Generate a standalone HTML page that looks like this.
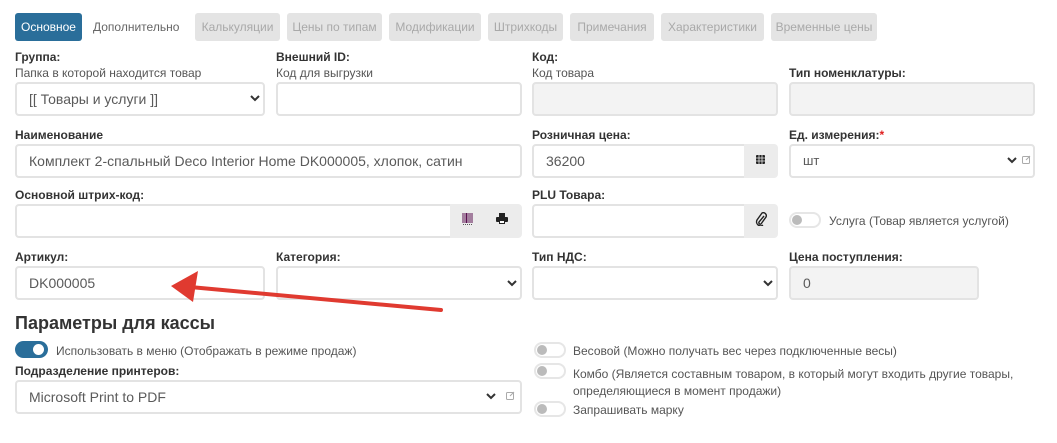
<!DOCTYPE html>
<html><head><meta charset="utf-8">
<style>
*{box-sizing:border-box;margin:0;padding:0}
body{width:1057px;height:443px;background:#fff;font-family:"Liberation Sans",sans-serif;color:#333;position:relative;overflow:hidden}
.a{position:absolute}
.tab{position:absolute;top:13px;height:28px;border-radius:3px;background:#e4e4e4;color:#a9a9a9;font-size:12px;line-height:28px;text-align:center}
.lb{position:absolute;font-size:12px;font-weight:bold;color:#333}
.sl{position:absolute;font-size:12px;color:#555}
.in{position:absolute;height:34px;border:2px solid #e3e3e3;border-radius:4px;background:#fff;font-size:14px;color:#5a5a5a;line-height:30px;padding-left:12px}
.ro{background:#f3f3f3}
.addon{position:absolute;height:34px;background:#ececec;border-radius:0 4px 4px 0}
.chev{position:absolute;width:10px;height:8px}
.tg{position:absolute;width:32px;height:16px;border-radius:8px;border:2px solid #e6e6e6;background:#fff}
.tg i{position:absolute;left:1px;top:1px;width:10px;height:10px;border-radius:5px;background:#bbb}
.tl{position:absolute;font-size:12px;color:#555}
</style></head><body>
<div class="tab" style="left:15px;width:67px;background:#2a6e9a;color:#fff">Основное</div>
<div class="a" style="left:93px;top:13px;line-height:28px;font-size:12px;color:#666">Дополнительно</div>
<div class="tab" style="left:195px;width:85px">Калькуляции</div>
<div class="tab" style="left:287px;width:95px">Цены по типам</div>
<div class="tab" style="left:389px;width:92px">Модификации</div>
<div class="tab" style="left:488px;width:75px">Штрихкоды</div>
<div class="tab" style="left:570px;width:84px">Примечания</div>
<div class="tab" style="left:661px;width:103px">Характеристики</div>
<div class="tab" style="left:771px;width:106px">Временные цены</div>

<div class="lb" style="left:15px;top:50px">Группа:</div>
<div class="sl" style="left:15px;top:66px">Папка в которой находится товар</div>
<div class="in" style="left:15px;top:82px;width:250px">[[ Товары и услуги ]]</div>
<svg class="chev" style="left:250px;top:94px" viewBox="0 0 10 8"><path d="M1 2l4 4 4-4" stroke="#333" stroke-width="2" fill="none"/></svg>

<div class="lb" style="left:276px;top:50px">Внешний ID:</div>
<div class="sl" style="left:276px;top:66px">Код для выгрузки</div>
<div class="in" style="left:276px;top:82px;width:246px"></div>

<div class="lb" style="left:532px;top:50px">Код:</div>
<div class="sl" style="left:532px;top:66px">Код товара</div>
<div class="in ro" style="left:532px;top:82px;width:246px"></div>

<div class="lb" style="left:789px;top:66px">Тип номенклатуры:</div>
<div class="in ro" style="left:789px;top:82px;width:246px"></div>

<div class="lb" style="left:15px;top:128px">Наименование</div>
<div class="in" style="left:15px;top:144px;width:507px">Комплект 2-спальный Deco Interior Home DK000005, хлопок, сатин</div>

<div class="lb" style="left:532px;top:128px">Розничная цена:</div>
<div class="in" style="left:532px;top:144px;width:214px;border-radius:4px 0 0 4px">36200</div>
<div class="addon" style="left:744px;top:144px;width:34px"></div>
<svg class="a" style="left:756px;top:155px" width="9" height="9" viewBox="0 0 9 9"><rect width="9" height="9" rx="1" fill="#222"/><path d="M0 3h9M0 6h9M3 0v9M6 0v9" stroke="#ececec" stroke-width=".8"/></svg>

<div class="lb" style="left:789px;top:128px">Ед. измерения:<span style="color:#e02020">*</span></div>
<div class="in" style="left:789px;top:144px;width:246px;font-size:13px">шт</div>
<svg class="chev" style="left:1007px;top:156px" viewBox="0 0 10 8"><path d="M1 2l4 4 4-4" stroke="#333" stroke-width="2" fill="none"/></svg>
<svg class="a" style="left:1022px;top:155px" width="9" height="9" viewBox="0 0 9 9"><rect x=".5" y="1.5" width="7" height="7" rx="1" fill="none" stroke="#aaa"/><path d="M4 5l4-4" stroke="#aaa"/></svg>

<div class="lb" style="left:15px;top:188px">Основной штрих-код:</div>
<div class="in" style="left:15px;top:204px;width:437px;border-radius:4px 0 0 4px"></div>
<div class="addon" style="left:450px;top:204px;width:72px"></div>
<svg class="a" style="left:462px;top:213px" width="11" height="12" viewBox="0 0 11 12"><path d="M1 0v10M3 0v10M4.5 0v10M6 0v10M8 0v10M10 0v10" stroke="#5a1050" stroke-width="1"/><path d="M1 11.5h9" stroke="#555" stroke-dasharray="1 1"/></svg>
<svg class="a" style="left:496px;top:213px" width="12" height="11" viewBox="0 0 12 11"><rect x="3" y="0" width="6" height="4" fill="#222"/><rect x="0" y="4" width="12" height="5" rx="1" fill="#222"/><rect x="3" y="7" width="6" height="4" fill="#222"/><rect x="4" y="8" width="4" height="2" fill="#fff"/></svg>

<div class="lb" style="left:532px;top:188px">PLU Товара:</div>
<div class="in" style="left:532px;top:204px;width:214px;border-radius:4px 0 0 4px"></div>
<div class="addon" style="left:744px;top:204px;width:34px"></div>
<svg class="a" style="left:755px;top:212px" width="12" height="14" viewBox="0 0 12 14"><path d="M9 4L4 10a1.5 1.5 0 0 0 2 2l5-7a3 3 0 0 0-4-4L2 8a4 4 0 0 0 6 5" stroke="#222" stroke-width="1.4" fill="none"/></svg>

<div class="tg" style="left:789px;top:212px"><i></i></div>
<div class="tl" style="left:829px;top:214px">Услуга (Товар является услугой)</div>

<div class="lb" style="left:15px;top:250px">Артикул:</div>
<div class="in" style="left:15px;top:266px;width:250px">DK000005</div>
<div class="lb" style="left:276px;top:250px">Категория:</div>
<div class="in" style="left:276px;top:266px;width:246px"></div>
<svg class="chev" style="left:507px;top:279px" viewBox="0 0 10 8"><path d="M1 2l4 4 4-4" stroke="#333" stroke-width="2" fill="none"/></svg>
<div class="lb" style="left:532px;top:250px">Тип НДС:</div>
<div class="in" style="left:532px;top:266px;width:246px"></div>
<svg class="chev" style="left:763px;top:279px" viewBox="0 0 10 8"><path d="M1 2l4 4 4-4" stroke="#333" stroke-width="2" fill="none"/></svg>
<div class="lb" style="left:789px;top:250px">Цена поступления:</div>
<div class="in ro" style="left:789px;top:266px;width:190px">0</div>

<svg class="a" style="left:0;top:0" width="1057" height="443"><path d="M441 310L190 287" stroke="#e03a30" stroke-width="4" stroke-linecap="round"/><path d="M171 286L198 271L193 302Z" fill="#e03a30"/></svg>

<div class="a" style="left:15px;top:313px;font-size:18px;font-weight:bold;color:#333">Параметры для кассы</div>
<div class="a" style="left:15px;top:341px;width:33px;height:17px;border-radius:9px;background:#2a6e9a"><i style="position:absolute;left:18px;top:3px;width:11px;height:11px;border-radius:6px;background:#fff"></i></div>
<div class="tl" style="left:56px;top:344px">Использовать в меню (Отображать в режиме продаж)</div>
<div class="lb" style="left:15px;top:364px">Подразделение принтеров:</div>
<div class="in" style="left:15px;top:380px;width:507px">Microsoft Print to PDF</div>
<svg class="chev" style="left:486px;top:392px" viewBox="0 0 10 8"><path d="M1 2l4 4 4-4" stroke="#333" stroke-width="2" fill="none"/></svg>
<svg class="a" style="left:506px;top:391px" width="9" height="9" viewBox="0 0 9 9"><rect x=".5" y="1.5" width="7" height="7" rx="1" fill="none" stroke="#aaa"/><path d="M4 5l4-4" stroke="#aaa"/></svg>

<div class="tg" style="left:534px;top:342px"><i></i></div>
<div class="tl" style="left:573px;top:344px">Весовой (Можно получать вес через подключенные весы)</div>
<div class="tg" style="left:534px;top:363px"><i></i></div>
<div class="tl" style="left:573px;top:366px;line-height:17px">Комбо (Является составным товаром, в который могут входить другие товары,<br>определяющиеся в момент продажи)</div>
<div class="tg" style="left:534px;top:401px"><i></i></div>
<div class="tl" style="left:573px;top:403px">Запрашивать марку</div>
</body></html>
